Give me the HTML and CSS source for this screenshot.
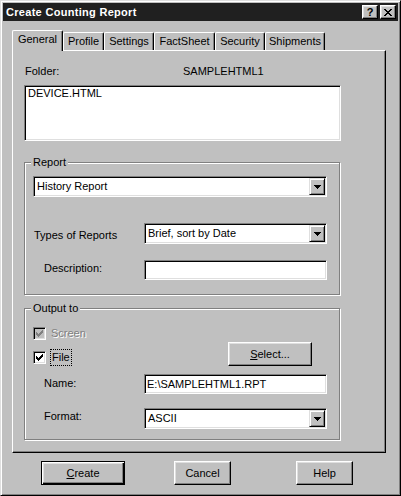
FILE: index.html
```html
<!DOCTYPE html>
<html>
<head>
<meta charset="utf-8">
<title>Create Counting Report</title>
<link rel="stylesheet" href="styles.css">
</head>
<body>
<div class="window">
  <div class="titlebar">
    <span class="title">Create Counting Report</span>
    <div class="title-btns">
      <span class="tbtn tbtn-help">?</span>
      <span class="tbtn tbtn-close">
        <svg width="8" height="7" viewBox="0 0 8 7" shape-rendering="crispEdges"><path fill="#000" d="M0 0h2v1h-2z M6 0h2v1h-2z M1 1h2v1h-2z M5 1h2v1h-2z M2 2h4v1h-4z M3 3h2v1h-2z M2 4h4v1h-4z M1 5h2v1h-2z M5 5h2v1h-2z M0 6h2v1h-2z M6 6h2v1h-2z"/></svg>
      </span>
    </div>
  </div>

  <div class="tabs">
    <div class="tab tab-general active">General</div>
    <div class="tab tab-profile">Profile</div>
    <div class="tab tab-settings">Settings</div>
    <div class="tab tab-factsheet">FactSheet</div>
    <div class="tab tab-security">Security</div>
    <div class="tab tab-shipments">Shipments</div>
  </div>

  <div class="panel">
    <div class="folder-row">
      <span class="folder-label">Folder:</span>
      <span class="folder-value">SAMPLEHTML1</span>
    </div>
    <div class="listbox">DEVICE.HTML</div>

    <div class="group group-report">
      <span class="legend">Report</span>
      <div class="combo combo-wide">
        <span class="combo-text">History Report</span>
        <span class="combo-btn"><svg width="7" height="4" viewBox="0 0 7 4" shape-rendering="crispEdges"><path fill="#000" d="M0 0h7v1h-7z M1 1h5v1h-5z M2 2h3v1h-3z M3 3h1v1h-1z"/></svg></span>
      </div>
      <div class="field-row row-types">
        <span class="lbl lbl-flush">Types of Reports</span>
        <div class="combo">
          <span class="combo-text">Brief, sort by Date</span>
          <span class="combo-btn"><svg width="7" height="4" viewBox="0 0 7 4" shape-rendering="crispEdges"><path fill="#000" d="M0 0h7v1h-7z M1 1h5v1h-5z M2 2h3v1h-3z M3 3h1v1h-1z"/></svg></span>
        </div>
      </div>
      <div class="field-row row-desc">
        <span class="lbl">Description:</span>
        <div class="textbox"></div>
      </div>
    </div>

    <div class="group group-output">
      <span class="legend">Output to</span>
      <div class="check-item check-screen">
        <span class="checkbox disabled"><svg width="7" height="7" viewBox="0 0 7 7" shape-rendering="crispEdges"><path d="M0 2h1v3h-1z M1 3h1v3h-1z M2 4h1v3h-1z M3 3h1v3h-1z M4 2h1v3h-1z M5 1h1v3h-1z M6 0h1v3h-1z"/></svg></span>
        <span class="check-label disabled-text">Screen</span>
      </div>
      <div class="file-row">
        <div class="check-item">
          <span class="checkbox"><svg width="7" height="7" viewBox="0 0 7 7" shape-rendering="crispEdges"><path d="M0 2h1v3h-1z M1 3h1v3h-1z M2 4h1v3h-1z M3 3h1v3h-1z M4 2h1v3h-1z M5 1h1v3h-1z M6 0h1v3h-1z"/></svg></span>
          <span class="check-label focus">File</span>
        </div>
        <div class="btn btn-select"><span><u>S</u>elect...</span></div>
      </div>
      <div class="field-row row-name">
        <span class="lbl">Name:</span>
        <div class="textbox"><span class="textbox-text">E:\SAMPLEHTML1.RPT</span></div>
      </div>
      <div class="field-row row-format">
        <span class="lbl">Format:</span>
        <div class="combo">
          <span class="combo-text">ASCII</span>
          <span class="combo-btn"><svg width="7" height="4" viewBox="0 0 7 4" shape-rendering="crispEdges"><path fill="#000" d="M0 0h7v1h-7z M1 1h5v1h-5z M2 2h3v1h-3z M3 3h1v1h-1z"/></svg></span>
        </div>
      </div>
    </div>
  </div>

  <div class="buttons">
    <div class="btn btn-default btn-create"><span><u>C</u>reate</span></div>
    <div class="btn btn-cancel">Cancel</div>
    <div class="btn btn-help">Help</div>
  </div>
</div>
</body>
</html>
```

FILE: styles.css
```css
html, body {
  margin: 0;
  padding: 0;
  background: #c0c0c0;
}

body {
  font-family: "Liberation Sans", Arial, sans-serif;
  font-size: 11px;
  line-height: 13px;
  color: #000;
}

.window {
  width: 401px;
  height: 496px;
  box-sizing: border-box;
  background: #c0c0c0;
  border: 1px solid;
  border-color: #dfdfdf #000 #000 #dfdfdf;
  box-shadow: inset 1px 1px 0 #fff, inset -1px -1px 0 #808080;
  padding: 2px;
}

/* Title bar */
.titlebar {
  height: 18px;
  background: #202020;
  display: flex;
  align-items: center;
  justify-content: space-between;
  padding: 0 2px 0 3px;
}

.title {
  color: #fff;
  font-weight: bold;
  letter-spacing: 0.3px;
  line-height: 18px;
}

.title-btns {
  display: flex;
  gap: 2px;
}

.tbtn {
  width: 16px;
  height: 14px;
  box-sizing: border-box;
  background: #c0c0c0;
  border: 1px solid;
  border-color: #fff #000 #000 #fff;
  box-shadow: inset -1px -1px 0 #808080, inset 1px 1px 0 #dfdfdf;
  display: flex;
  align-items: center;
  justify-content: center;
}

.tbtn-help {
  font-weight: bold;
  font-size: 11px;
  line-height: 12px;
}

/* Tabs */
.tabs {
  margin-top: 9px;
  padding-left: 9px;
  height: 20px;
  display: flex;
  align-items: flex-end;
}

.tab {
  height: 18px;
  box-sizing: border-box;
  border-top: 1px solid #fff;
  border-left: 1px solid #fff;
  border-right: 1px solid #000;
  border-radius: 2px 2px 0 0;
  box-shadow: inset -1px 0 0 #808080;
  text-align: center;
  padding-top: 2px;
  line-height: 13px;
}

.tab.active {
  height: 21px;
  margin-bottom: -1px;
  position: relative;
  z-index: 1;
  background: #c0c0c0;
  padding-top: 2px;
}

.tab-general { width: 51px; }
.tab-profile { width: 41px; }
.tab-settings { width: 50px; }
.tab-factsheet { width: 61px; }
.tab-security { width: 50px; }
.tab-shipments { width: 60px; }

/* Panel */
.panel {
  margin-left: 9px;
  width: 374px;
  height: 403px;
  box-sizing: border-box;
  border: 1px solid;
  border-color: #fff #000 #000 #fff;
  box-shadow: inset -1px -1px 0 #808080;
  padding: 14px 0 0 11px;
}

.folder-row {
  display: flex;
  height: 13px;
}

.folder-label {
  width: 158px;
  padding-left: 1px;
}

/* Sunken controls */
.listbox,
.combo,
.textbox,
.checkbox {
  box-sizing: border-box;
  background: #fff;
  border: 1px solid;
  border-color: #808080 #fff #fff #808080;
  box-shadow: inset 1px 1px 0 #000, inset -1px -1px 0 #dfdfdf;
}

.listbox {
  margin-top: 7px;
  width: 317px;
  height: 56px;
  padding: 1px 3px;
}

/* Group boxes */
.group {
  position: relative;
  width: 316px;
  box-sizing: border-box;
  border: 1px solid #808080;
  box-shadow: 1px 1px 0 #fff, inset 1px 1px 0 #fff;
  padding: 0 0 0 8px;
}

.legend {
  position: absolute;
  top: -7px;
  left: 6px;
  padding: 0 2px;
  background: #c0c0c0;
  line-height: 13px;
}

.group-report {
  margin-top: 21px;
  padding-top: 13px;
  padding-bottom: 14px;
}

.group-output {
  margin-top: 13px;
  padding-top: 16px;
  padding-bottom: 10px;
}

.combo {
  width: 183px;
  height: 21px;
  display: flex;
  padding: 1px;
}

.combo-wide {
  width: 294px;
}

.combo-text {
  flex: 1;
  padding-left: 2px;
  line-height: 17px;
  white-space: nowrap;
}

.combo-btn {
  width: 16px;
  height: 17px;
  box-sizing: border-box;
  background: #c0c0c0;
  border: 1px solid;
  border-color: #dfdfdf #000 #000 #dfdfdf;
  box-shadow: inset 1px 1px 0 #fff, inset -1px -1px 0 #808080;
  display: flex;
  align-items: center;
  justify-content: center;
}

.textbox {
  width: 183px;
  height: 20px;
  padding: 1px 1px 1px 2px;
  line-height: 16px;
}

.field-row {
  display: flex;
  align-items: flex-start;
}

.lbl {
  width: 111px;
  box-sizing: border-box;
  padding-left: 11px;
  white-space: nowrap;
}

.lbl-flush {
  padding-left: 1px;
}

.row-types {
  margin-top: 26px;
}
.row-types .lbl { margin-top: 6px; }

.row-desc {
  margin-top: 16px;
}
.row-desc .lbl { margin-top: 2px; }

.row-name {
  margin-top: 8px;
}
.row-name .lbl { margin-top: 3px; }

.row-format {
  margin-top: 14px;
}
.row-format .lbl { margin-top: 2px; }

/* Checkboxes */
.check-item {
  display: flex;
  align-items: center;
  height: 17px;
}

.checkbox {
  width: 13px;
  height: 13px;
  display: flex;
  align-items: center;
  justify-content: center;
  fill: #000;
}

.checkbox.disabled {
  background: #c0c0c0;
  fill: #808080;
}

.check-label {
  margin-left: 5px;
}

.disabled-text {
  color: #808080;
  text-shadow: 1px 1px 0 #fff;
}

.focus {
  margin-left: 4px;
  height: 17px;
  box-sizing: border-box;
  border: 1px dotted #000;
  padding: 0 1px;
  line-height: 15px;
}

.file-row {
  display: flex;
  align-items: flex-end;
  height: 24px;
}

/* Buttons */
.btn {
  height: 24px;
  box-sizing: border-box;
  background: #c0c0c0;
  border: 1px solid;
  border-color: #fff #000 #000 #fff;
  box-shadow: inset -1px -1px 0 #808080, inset 1px 1px 0 #dfdfdf;
  display: flex;
  align-items: center;
  justify-content: center;
  line-height: 13px;
}

.btn-select {
  width: 84px;
  margin-left: auto;
  margin-right: 27px;
}

.btn-default {
  border-color: #000;
  box-shadow: inset 1px 1px 0 #fff, inset -1px -1px 0 #000, inset -2px -2px 0 #808080, inset 2px 2px 0 #dfdfdf;
}

.buttons {
  margin-top: 8px;
  padding-left: 38px;
  display: flex;
}

.btn-create { width: 84px; }
.btn-cancel { width: 57px; margin-left: 49px; }
.btn-help { width: 57px; margin-left: 65px; }
```
